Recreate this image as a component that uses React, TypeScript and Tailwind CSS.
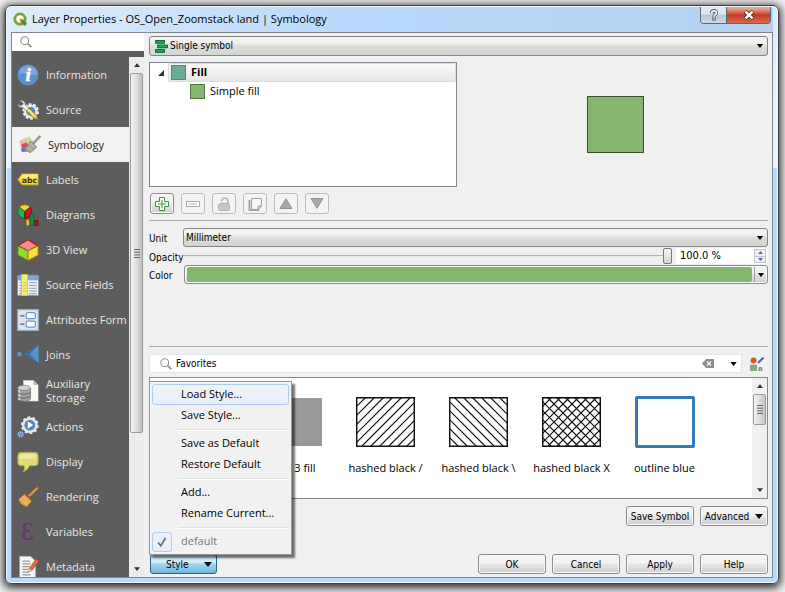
import { ButtonHTMLAttributes, FC, ReactNode } from "react";

const segoe = "font-['Open_Sans','Noto_Sans',sans-serif]";
const tahoma = "font-['DejaVu_Sans_Condensed','DejaVu_Sans',sans-serif]";

const buttonStyling =
  "rounded-[3px] border border-[#8b8b8b] bg-linear-to-b from-[#f3f3f3] from-45% via-[#e6e6e6] via-50% to-[#cfcfcf] shadow-[inset_0_0_0_1px_#fafafa]";
const comboStyling =
  "rounded-[3px] border border-[#858585] bg-linear-to-b from-[#f1f2f1] from-30% via-[#d8dbd8] via-55% to-[#d2d5d2]";

const Arrow: FC<{ className?: string; up?: boolean }> = ({ className = "", up }) => (
  <svg viewBox="0 0 8 5" className={`h-[5px] w-2 shrink-0 ${className}`} fill="currentColor">
    <path d={up ? "M0 5 4 0 8 5Z" : "M0 0 8 0 4 5Z"} />
  </svg>
);

const SearchIcon: FC<{ className?: string }> = ({ className = "" }) => (
  <svg viewBox="0 0 12 12" className={`size-3 shrink-0 ${className}`} fill="none" stroke="#8f8f8f">
    <circle cx="4.7" cy="4.7" r="3.9" strokeWidth="1.1" />
    <path d="m7.6 7.6 3.8 3.6" strokeWidth="1.6" />
  </svg>
);

const Grip: FC = () => (
  <svg viewBox="0 0 6 9" className="h-[9px] w-1.5" stroke="#666" strokeWidth="1">
    <path d="M0 .5h6M0 3.2h6M0 5.9h6M0 8.5h6" />
  </svg>
);

const InformationIcon = () => (
  <svg viewBox="0 0 24 24">
    <circle cx="12" cy="12" r="11.5" fill="#5a8fcd" />
    <path d="M1.5 11a10.6 10.6 0 0 1 21 0C17 15 8 8 1.5 11Z" fill="#7ba5da" />
    <text
      x="12.3"
      y="18.5"
      textAnchor="middle"
      fontFamily="Liberation Serif, serif"
      fontWeight="bold"
      fontStyle="italic"
      fontSize="21"
      fill="#fff"
      stroke="#fff"
      strokeWidth=".6"
    >
      i
    </text>
  </svg>
);

const SourceIcon = () => (
  <svg viewBox="0 0 24 24">
    <circle cx="15" cy="13.5" r="7.5" fill="#dfe5e9" />
    <circle cx="15" cy="13.5" r="7.5" fill="none" stroke="#eef1f3" strokeWidth="3" strokeDasharray="3 1.7" />
    <circle cx="15" cy="13.5" r="4.8" fill="#5b83b5" />
    <path
      d="M2.5 2.5c3-2 7 .3 6.500 4l5 5-2.500 2.500-5.300-5C3.500 10 1 8 1 5.500l3 2L7 5.500 5.500 3Z"
      fill="#f4f4f4"
      stroke="#777"
      strokeWidth=".7"
    />
    <path d="m10.5 13 3-3 8 8 1.300 4.500-4.800-1.800Z" fill="#e5c843" stroke="#80692a" strokeWidth=".8" />
    <path d="m12 11.5 8 8" stroke="#fff09a" strokeWidth="1.2" />
  </svg>
);

const SymbologyIcon = () => (
  <svg viewBox="0 0 26 22">
    <path d="m1 7 11-5 7 9-7 8-9 1Z" fill="#9fd08c" />
    <path d="m1 7 6-3 3 6-6 4Z" fill="#f0b4b4" />
    <path d="m12 2 4 5-5 4-4-7Z" fill="#c9df96" />
    <path d="m3 11 6-2 4 7-9 3Z" fill="#e2436c" />
    <path d="m2 17 8-3 4 5-10 1Z" fill="#4585cf" />
    <path d="M24.5 2 17 10" stroke="#9d9888" strokeWidth="3" strokeLinecap="round" />
    <path d="m13 7 8 7c-2 3-5 5-8 7-3-1-5-3-6-5 3-2 5-5 6-9Z" fill="#aba598" stroke="#7d786d" strokeWidth=".7" />
    <path d="m13 10 6 5M10 14l5 4" stroke="#c9c4b8" />
  </svg>
);

const LabelsIcon = () => (
  <svg viewBox="0 0 24 14">
    <path d="M1 7 5.500 1H23v12H5.500Z" fill="#f1d43a" stroke="#c7a317" />
    <path d="M6 1.500h16.500V6H3Z" fill="#fbe978" />
    <text x="13.5" y="10.5" textAnchor="middle" fontFamily="DejaVu Sans, sans-serif" fontWeight="bold" fontSize="8.500" fill="#403712">
      abc
    </text>
  </svg>
);

const DiagramsIcon = () => (
  <svg viewBox="0 0 24 24">
    <path d="M8.500 8 2.500 3.500a8 8 0 0 1 12 0Z" fill="#f6d32d" stroke="#8c6a10" strokeWidth=".7" />
    <path d="M8.500 8 2.500 3.500C-.5 8 .5 14 8.500 16Z" fill="#24b04b" stroke="#0a6a26" strokeWidth=".8" />
    <path d="M8.500 8l6-4.500c3 4 2 11-6 12.500Z" fill="#cc1717" stroke="#700" strokeWidth=".8" />
    <path d="M10 17h3.500v6.500H10Z" fill="#f3c32a" stroke="#8c6a10" strokeWidth=".7" />
    <path d="M14.500 11h3.500v12.500h-3.500Z" fill="#15944a" stroke="#06502a" strokeWidth=".7" />
    <path d="M19.500 18H23v5.500h-3.500Z" fill="#c51010" stroke="#600" strokeWidth=".7" />
  </svg>
);

const View3DIcon = () => (
  <svg viewBox="0 0 24 24" strokeLinejoin="round">
    <path d="m12 .8 11 6.700-11 5.500L1 7Z" fill="#f58f8f" stroke="#b71515" strokeWidth="1.300" />
    <path d="m1 7.500 11 5.500v10.500L1 17.500Z" fill="#8fdc2d" stroke="#4c8b10" />
    <path d="m23 7.500-11 5.500v10.500l11-6Z" fill="#f9e03c" stroke="#a48212" />
  </svg>
);

const SourceFieldsIcon = () => (
  <svg viewBox="0 0 24 24">
    <path d="M.5 1.500h23v22H.5Z" fill="#eef2f6" stroke="#7194ba" />
    <path d="M1 2h22v5H1Z" fill="#7fa6d1" />
    <path d="M2.500 9.500h19M2.500 12.500h19M2.500 15.500h19M2.500 18.500h19M2.500 21.500h19" stroke="#8c9aab" strokeWidth="1.200" />
    <path d="M12.500 7v16" stroke="#fff" />
    <path d="M5 .5h6.500v23H5Z" fill="#f7ee78" stroke="#d6c437" />
    <path d="M6.500 9.500h4M6.500 12.500h4M6.500 15.500h4M6.500 18.500h4" stroke="#c9c062" />
  </svg>
);

const AttributesFormIcon = () => (
  <svg viewBox="0 0 24 24">
    <path d="M.7.700h22.600v22.600H.7Z" fill="#dce5ef" stroke="#91aed0" strokeWidth="1.400" />
    <path d="M3.500 7.500H8M3.500 16.500H8" stroke="#4c5663" strokeWidth="1.600" />
    <rect x="10" y="4" width="10" height="6.500" rx="1.500" fill="#fff" stroke="#6e94c0" strokeWidth="1.300" />
    <rect x="10" y="13.300" width="10" height="6.500" rx="1.500" fill="#fff" stroke="#6e94c0" strokeWidth="1.300" />
  </svg>
);

const JoinsIcon = () => (
  <svg viewBox="0 0 24 20">
    <circle cx="2.600" cy="10" r="2.600" fill="#648fc3" />
    <path d="M23.500 0v20L7 10Z" fill="#4070a6" />
    <path d="M23.500 0v20L14 10Z" fill="#5d8fcb" />
  </svg>
);

const AuxiliaryIcon = () => (
  <svg viewBox="0 0 24 24">
    <path d="M7 .5h11l5 5V23H7Z" fill="#fafafa" stroke="#ddd" strokeWidth=".6" />
    <path d="M18 .5v5h5Z" fill="#b8b8b8" />
    <path d="M.7 9v11.500c0 3.600 14 3.600 14 0V9Z" fill="#a1a1a1" stroke="#666" strokeWidth=".7" />
    <path d="M2.500 10v12" stroke="#d5d5d5" strokeWidth="2" />
    <ellipse cx="7.700" cy="8.500" rx="7" ry="2.800" fill="#d0d0d0" stroke="#777" strokeWidth=".7" />
    <path d="M.7 13c0 3.400 14 3.400 14 0M.7 17.200c0 3.400 14 3.400 14 0" fill="none" stroke="#5e5e5e" />
  </svg>
);

const ActionsIcon = () => (
  <svg viewBox="0 0 24 24">
    <circle cx="14" cy="10" r="7.200" fill="#5485bd" stroke="#e6e9ec" strokeWidth="2.600" />
    <circle cx="14" cy="10" r="8.700" fill="none" stroke="#e6e9ec" strokeWidth="2" strokeDasharray="3 2.460" />
    <path d="M11.700 5.800v8l6-4Z" fill="#fff" />
    <circle cx="4" cy="20" r="2.800" fill="#6a99cf" stroke="#94b7df" strokeWidth="1.500" strokeDasharray="1.400 1" />
  </svg>
);

const DisplayIcon = () => (
  <svg viewBox="0 0 24 24">
    <path
      d="M4.500 1.500h15A3.500 3.500 0 0 1 23 5v7.500a3.500 3.500 0 0 1-3.500 3.500h-6c-1 3-3 5-6.500 6.500C8.500 20 8.500 18 8 16H4.500A3.500 3.500 0 0 1 1 12.500V5a3.500 3.500 0 0 1 3.500-3.500Z"
      fill="#e3d978"
      stroke="#b5aa45"
    />
    <path d="M5 3.500h14c3 1 2 5-1 5H6c-4 0-4-4-1-5Z" fill="#f0eaa6" />
  </svg>
);

const RenderingIcon = () => (
  <svg viewBox="0 0 24 24">
    <path d="m13 11 9.500-9" stroke="#b06f1d" strokeWidth="3" strokeLinecap="round" />
    <path d="m13 11 9-8.500" stroke="#eeb35a" strokeWidth="1.300" />
    <path d="m8.500 8.500 8 7.500-5.500 6.500C6 22 3 19 1.500 14.500Z" fill="#e3a654" stroke="#9a6420" strokeWidth=".8" />
    <path d="m4 13.500 7 7M6.500 11.500l7 7" stroke="#f6cf8d" />
    <path d="m8.500 8.500 8 7.500" stroke="#8d5a18" strokeWidth="1.500" />
  </svg>
);

const VariablesIcon = () => (
  <svg viewBox="0 0 24 24" overflow="visible">
    <text x="11.500" y="20.500" textAnchor="middle" fontFamily="Liberation Serif, DejaVu Serif, serif" fontSize="27" fill="#66386f" stroke="#66386f" strokeWidth=".6">
      Ɛ
    </text>
  </svg>
);

const MetadataIcon = () => (
  <svg viewBox="0 0 24 24">
    <path d="M3 .5h12l5 5V24H3Z" fill="#f5f5f5" stroke="#ccc" strokeWidth=".7" />
    <path d="M6 5.500h8M6 8.500h9M6 11.500h8M6 14.500h6M6 17.500h7M6 20.500h9" stroke="#999" strokeWidth="1.300" />
    <path d="m21 3 3 2.500-8 10.500-3.500 1.500.7-3.800Z" fill="#e36a3a" stroke="#a03c17" strokeWidth=".6" />
    <path d="m13.200 13.700 2.800 2.300-3.500 1.500Z" fill="#efd9b0" />
  </svg>
);

interface Section {
  name: string;
  icon: ReactNode;
}

const sections: Section[] = [
  { name: "Information", icon: <InformationIcon /> },
  { name: "Source", icon: <SourceIcon /> },
  { name: "Symbology", icon: <SymbologyIcon /> },
  { name: "Labels", icon: <LabelsIcon /> },
  { name: "Diagrams", icon: <DiagramsIcon /> },
  { name: "3D View", icon: <View3DIcon /> },
  { name: "Source Fields", icon: <SourceFieldsIcon /> },
  { name: "Attributes Form", icon: <AttributesFormIcon /> },
  { name: "Joins", icon: <JoinsIcon /> },
  { name: "Auxiliary Storage", icon: <AuxiliaryIcon /> },
  { name: "Actions", icon: <ActionsIcon /> },
  { name: "Display", icon: <DisplayIcon /> },
  { name: "Rendering", icon: <RenderingIcon /> },
  { name: "Variables", icon: <VariablesIcon /> },
  { name: "Metadata", icon: <MetadataIcon /> },
];

const TitleBar: FC = () => (
  <header className="mt-px flex h-[25px] shrink-0 items-start justify-between rounded-t-[4px] bg-linear-to-r from-[#dfebf8] via-[#b7d9fc] via-45% to-[#b5d2ee] pl-0.5">
    <div className={`${segoe} flex h-[25px] items-center gap-1 text-[11px] text-black`}>
      <svg viewBox="0 0 16 16" className="size-[15px]">
        <circle cx="7.500" cy="7.500" r="5.500" fill="#fff" stroke="#76a53a" strokeWidth="3" />
        <path d="m7.500 7.500 3 .3 4.500 4.700-2.500 2.500L8 10.500Z" fill="#55862a" />
        <path d="m7 7 2.500.3 1 1.200-2 2L7.300 9.400Z" fill="#e98a26" />
      </svg>
      <h1>Layer Properties - OS_Open_Zoomstack land | Symbology</h1>
    </div>
    <div className="mr-0.5 flex h-[17px] overflow-hidden rounded-b-[4px] border border-t-0 border-[#5d6876]">
      <button
        aria-label="Help on this window"
        className="flex w-[26px] items-center justify-center border-r border-[#5d6876] bg-linear-to-b from-[#dfe8f2] from-45% via-[#b6c4d5] via-50% to-[#ccd9e8]"
      >
        <svg viewBox="0 0 12 14" className="h-3 w-2.5">
          <path d="M3 5c0-4 6-4 6-.5C9 6.500 6 6.500 6 9" fill="none" stroke="#4c5364" strokeWidth="4" />
          <path d="M4 10h4v3.500H4Z" fill="#4c5364" />
          <path d="M3 5c0-4 6-4 6-.5C9 6.500 6 6.500 6 9M6 10.800v1.700" fill="none" stroke="#fff" strokeWidth="2" />
        </svg>
      </button>
      <button
        aria-label="Close"
        className="flex w-[43px] items-center justify-center bg-linear-to-b from-[#e3a496] from-10% via-[#c23a22] via-50% to-[#d8694f]"
      >
        <svg viewBox="0 0 12 10" className="h-2.5 w-3">
          <path d="m2 1.500 8 7M10 1.500l-8 7" stroke="#5a3434" strokeWidth="4.200" />
          <path d="m2.500 1.700 7 6.600M9.500 1.700l-7 6.600" stroke="#fff" strokeWidth="2.400" />
        </svg>
      </button>
    </div>
  </header>
);

const Sidebar: FC = () => (
  <aside className="flex w-[132px] shrink-0 flex-col bg-[#5d5d5d]">
    <label className="flex h-[18px] shrink-0 items-center bg-white pl-2">
      <SearchIcon />
      <input aria-label="Search sections" className={`${segoe} w-full min-w-0 px-1 text-[11px] outline-none`} />
    </label>
    <div className="mt-[6px] flex min-h-0 grow">
      <nav className="min-w-0 grow overflow-hidden">
        {sections.map(({ name, icon }) => {
          const active = name === "Symbology";
          const tall = name === "Auxiliary Storage";
          return (
            <button
              key={name}
              className={`${segoe} ${active ? "bg-[#f2f2f2] pl-[7px] text-[#222]" : "pl-[5px] text-[#e8e8e8]"} ${
                tall ? "h-[37px]" : "h-[35px]"
              } flex w-full items-center gap-[7px] text-left text-[11px] leading-[14px]`}
            >
              <span className="w-[22px] shrink-0 [&>svg]:w-[22px]">{icon}</span>
              <span className={tall ? "w-12" : "whitespace-nowrap"}>{name}</span>
            </button>
          );
        })}
      </nav>
      <div className="flex w-[15px] shrink-0 flex-col items-center justify-between bg-[#ececec] py-1.5 text-[#333]">
        <Arrow up className="!h-1 !w-1.5" />
        <div className="my-1.5 flex w-[13px] grow flex-col">
          <div className="flex h-[360px] items-center justify-center rounded-[2px] border border-[#9a9a9a] bg-linear-to-r from-[#f4f4f4] via-[#dedede] to-[#bdbec2]">
            <Grip />
          </div>
        </div>
        <Arrow className="!h-1 !w-1.5" />
      </div>
    </div>
  </aside>
);

interface ToolProps {
  label: string;
  enabled?: boolean;
  children: ReactNode;
}

const ToolButton: FC<ToolProps> = ({ label, enabled, children }) => (
  <button
    aria-label={label}
    disabled={!enabled}
    className={`${enabled ? buttonStyling : "rounded-[3px] border border-[#b9bcbe] bg-[#f3f3f3]"} flex h-[21px] w-6 items-center justify-center`}
  >
    {children}
  </button>
);

const SymbolTree: FC = () => (
  <div className={`${segoe} h-[125px] w-[308px] shrink-0 border border-[#828790] bg-white text-[11px] text-black`}>
    <div className="flex h-[19px] items-center pl-2">
      <svg viewBox="0 0 6 6" className="mr-1 size-1.5">
        <path d="M6 0v6H0Z" fill="#333" />
      </svg>
      <div className="flex h-full grow items-center gap-[5px] rounded-[2px] border border-[#dcdcdc] bg-linear-to-b from-[#fafafa] to-[#e6e6e6] pl-0.5 font-bold">
        <span className="size-[15px] border border-[#4f8a80] bg-[#6bab99]" />
        Fill
      </div>
    </div>
    <div className="flex h-[19px] items-center gap-[5px] pl-10">
      <span className="size-[15px] border border-[#55793f] bg-[#85b66f]" />
      Simple fill
    </div>
  </div>
);

const SymbolTools: FC = () => (
  <div className="mt-1.5 flex gap-[7px] pl-px">
    <ToolButton label="Add symbol layer" enabled>
      <svg viewBox="0 0 14 14" className="size-3.5" fill="#f6fbf4" stroke="#4c8d4a">
        <path d="M4.500.5h5v4h4v5h-4v4h-5v-4h-4v-5h4Z" />
        <path d="M7 3v8M3 7h8" />
      </svg>
    </ToolButton>
    <ToolButton label="Remove symbol layer">
      <svg viewBox="0 0 14 6" className="h-1.5 w-3.5" fill="#fff" stroke="#a9a9a9">
        <path d="M.5.5h13v5H.5ZM3 3h8" />
      </svg>
    </ToolButton>
    <ToolButton label="Lock layer color">
      <svg viewBox="0 0 14 14" className="size-3.5">
        <path d="M4.500 4.500C4.500 0 11 0 11 4v3" fill="none" stroke="#bcbcbc" strokeWidth="1.800" />
        <rect x="1.500" y="6.500" width="11" height="7" rx="2" fill="#c6c6c6" stroke="#b0b0b0" />
      </svg>
    </ToolButton>
    <ToolButton label="Duplicate layer">
      <svg viewBox="0 0 14 14" className="size-3.5" stroke="#a0a0a0">
        <path d="M1.500 3v10.500h10" fill="none" strokeWidth="1.800" />
        <path d="M3.500 1.500h10V9L10 12.500H3.500Z" fill="#f5f5f5" />
        <path d="M13.500 9H10v3.500Z" fill="#ddd" />
      </svg>
    </ToolButton>
    <ToolButton label="Move up">
      <svg viewBox="0 0 14 11" className="h-[11px] w-3.5">
        <path d="m7 .7 6 9.800H1Z" fill="#a9a9a9" stroke="#929292" />
      </svg>
    </ToolButton>
    <ToolButton label="Move down">
      <svg viewBox="0 0 14 11" className="h-[11px] w-3.5">
        <path d="M1 .5h12L7 10.300Z" fill="#a9a9a9" stroke="#929292" />
      </svg>
    </ToolButton>
  </div>
);

const SymbolSettings: FC = () => (
  <div className="mt-[7px] flex h-[118px] flex-col">
    <div className="flex h-[19px] items-center">
      <label htmlFor="unit" className="w-[34px] shrink-0 pt-0.5">
        Unit
      </label>
      <div className="relative h-full grow">
        <select id="unit" className={`${comboStyling} h-full w-full appearance-none pl-0.5 leading-none text-black outline-none`}>
          <option>Millimeter</option>
        </select>
        <Arrow className="pointer-events-none absolute top-2 right-1 !h-1" />
      </div>
    </div>
    <div className="flex h-[18px] items-center">
      <label htmlFor="opacity" className="w-[34px] shrink-0 pt-0.5">
        Opacity
      </label>
      <input
        id="opacity"
        type="range"
        defaultValue={100}
        className="h-4 min-w-0 grow appearance-none bg-transparent [&::-webkit-slider-runnable-track]:h-0.5 [&::-webkit-slider-runnable-track]:border-t [&::-webkit-slider-runnable-track]:border-[#aeb5b8] [&::-webkit-slider-runnable-track]:bg-[#e7eaea] [&::-webkit-slider-thumb]:-mt-2 [&::-webkit-slider-thumb]:h-4 [&::-webkit-slider-thumb]:w-[9px] [&::-webkit-slider-thumb]:appearance-none [&::-webkit-slider-thumb]:rounded-[2px] [&::-webkit-slider-thumb]:border [&::-webkit-slider-thumb]:border-[#777] [&::-webkit-slider-thumb]:bg-linear-to-b [&::-webkit-slider-thumb]:from-[#f8f8f8] [&::-webkit-slider-thumb]:to-[#d2d2d2]"
      />
      <div className="ml-1 flex h-4 w-[92px] items-center bg-white pr-0.5">
        <input aria-label="Opacity value" defaultValue="100.0 %" className="w-full min-w-0 pl-1 text-[11px] outline-none" />
        <div className="flex h-3.5 w-3 shrink-0 flex-col border border-[#c3c7cc] bg-[#eef0f3] text-[#5065a8]">
          <button aria-label="Increase" className="flex grow items-center justify-center border-b border-[#c3c7cc]">
            <Arrow up className="!h-[3px] !w-[5px]" />
          </button>
          <button aria-label="Decrease" className="flex grow items-center justify-center">
            <Arrow className="!h-[3px] !w-[5px]" />
          </button>
        </div>
      </div>
    </div>
    <div className="flex h-[19px] items-center">
      <span className="w-[35px] shrink-0 pt-0.5">Color</span>
      <div className={`${buttonStyling} flex h-full grow p-px pl-0.5`}>
        <button aria-label="Color" className="grow rounded-[2px] bg-[#84b66f]" />
        <button aria-label="Color menu" className="ml-0.5 flex w-3 items-center justify-center border-l border-[#9a9a9a]">
          <Arrow className="!h-1" />
        </button>
      </div>
    </div>
  </div>
);

// 45° strokes, cut off by the swatch's own box
const hatchLines = (back: boolean) => {
  let d = "";
  for (let x = -49; x < 110; x += 9) {
    d += back ? `M${x} 0l50 50` : `M${x} 50l50-50`;
  }
  return d;
};

const HatchSwatch: FC<{ slash?: boolean; back?: boolean }> = ({ slash, back }) => (
  <svg viewBox="0 0 59 50" className="h-[50px] w-[59px]" fill="none" stroke="#111" strokeWidth="1.200">
    {slash && <path d={hatchLines(false)} />}
    {back && <path d={hatchLines(true)} />}
    <path d="M.7.7h57.600v48.600H.7Z" strokeWidth="1.500" />
  </svg>
);

const symbols: { name: string; swatch: ReactNode }[] = [
  { name: "gray 3 fill", swatch: <div className="h-12 w-[59px] bg-[#999]" /> },
  { name: "hashed black /", swatch: <HatchSwatch slash /> },
  { name: "hashed black \\", swatch: <HatchSwatch back /> },
  { name: "hashed black X", swatch: <HatchSwatch slash back /> },
  { name: "outline blue", swatch: <div className="h-[52px] w-[60px] rounded-[2px] border-[3px] border-[#337ab7]" /> },
];

const SymbolGallery: FC = () => (
  <div className="mt-1 flex h-[122px] border border-[#828790] bg-white">
    <ul className={`${segoe} flex min-w-0 grow overflow-hidden pt-[17px] pl-24 text-[11px] text-black`}>
      {symbols.map(({ name, swatch }) => (
        <li key={name} className="flex w-[93px] shrink-0 flex-col items-center">
          <div className="flex h-[54px] items-center">{swatch}</div>
          <span className="mt-[11px] leading-4 whitespace-nowrap">{name}</span>
        </li>
      ))}
    </ul>
    <div className="flex w-[15px] shrink-0 flex-col items-center bg-[#f0f0f0] py-1.5 text-[#333]">
      <Arrow up className="!h-1 !w-1.5" />
      <div className="my-1.5 w-[13px] grow">
        <div className="flex h-[31px] items-center justify-center rounded-[2px] border border-[#9a9a9a] bg-linear-to-r from-[#f4f4f4] via-[#dedede] to-[#c4c5c8]">
          <Grip />
        </div>
      </div>
      <Arrow className="!h-1 !w-1.5" />
    </div>
  </div>
);

const FavoritesBar: FC = () => (
  <div className="mt-[7px] flex h-[19px] items-center gap-2">
    <label className="flex h-full grow items-center border border-[#e2e5e9] bg-white pr-1 pl-2.5">
      <SearchIcon />
      <input aria-label="Symbol group" defaultValue="Favorites" className="min-w-0 grow pl-1 text-black outline-none" />
      <button aria-label="Clear" className="mr-4">
        <svg viewBox="0 0 12 9" className="h-[9px] w-3">
          <path d="M4 0h8v9H4L0 4.500Z" fill="#8e8e8e" />
          <path d="m5 2.500 4 4M9 2.500l-4 4" stroke="#fff" strokeWidth="1.200" />
        </svg>
      </button>
      <button aria-label="Show groups" className="text-black">
        <Arrow className="!h-1 !w-[7px]" />
      </button>
    </label>
    <button aria-label="Style manager" className="mr-1">
      <svg viewBox="0 0 14 14" className="size-3.5">
        <circle cx="3.500" cy="3.500" r="3" fill="#d2602f" />
        <path d="m8 6 5.500-5.500" stroke="#44679c" strokeWidth="2" />
        <path d="M.5 8h6v5.500h-6Z" fill="#7fae84" stroke="#5c9163" strokeWidth=".6" />
        <text x="8" y="13.500" fontFamily="Liberation Sans, sans-serif" fontWeight="bold" fontSize="8" fill="#777">
          a
        </text>
      </svg>
    </button>
  </div>
);

const DialogButton: FC<ButtonHTMLAttributes<HTMLButtonElement>> = ({ children, ...rest }) => (
  <button {...rest} className={`${buttonStyling} flex h-5 w-[68px] items-center justify-center gap-1.5 whitespace-nowrap text-black`}>
    {children}
  </button>
);

const menuGroups = [
  ["Load Style...", "Save Style..."],
  ["Save as Default", "Restore Default"],
  ["Add...", "Rename Current..."],
];

const StyleMenu: FC = () => (
  <div
    role="menu"
    className={`${segoe} absolute bottom-full left-0 -mb-px -ml-px w-[143px] border border-[#979797] bg-[#f1f1f1] px-0.5 py-0.5 text-[11px] text-black shadow-[3px_3px_2px_rgba(0,0,0,0.55)]`}
  >
    {menuGroups.map((group) => (
      <div key={group[0]}>
        {group.map((item) => (
          <button
            key={item}
            role="menuitem"
            className={`${
              item === "Load Style..." ? "border-[#aeccf0] bg-linear-to-b from-[#f0f4f9] to-[#e8eef6]" : "border-transparent"
            } flex h-[21px] w-full items-center rounded-[3px] border pl-[28px] text-left`}
          >
            {item}
          </button>
        ))}
        <div className="mt-[3px] mb-[2px] ml-[26px] h-0.5 border-t border-[#e0e0e0] bg-white" />
      </div>
    ))}
    <button role="menuitemcheckbox" aria-checked="true" disabled className="flex h-[21px] w-full items-center gap-[9px] text-left text-[#777]">
      <span className="flex h-5 w-5 items-center justify-center rounded-[3px] border border-[#aeccf0] bg-[#eaf0f7]">
        <svg viewBox="0 0 10 10" className="size-2.5" fill="none" stroke="#666" strokeWidth="1.600">
          <path d="m1 5.500 2.800 3.300L8.500 1" />
        </svg>
      </span>
      default
    </button>
  </div>
);

const SymbologyPage: FC = () => (
  <main className={`${tahoma} flex min-w-0 grow flex-col pt-[3px] pr-1 pl-[5px] text-[10px] text-black`}>
    <div className="relative h-5 shrink-0">
      <select aria-label="Renderer" className={`${comboStyling} h-full w-full appearance-none pl-5 leading-none text-black outline-none`}>
        <option>Single symbol</option>
      </select>
      <svg viewBox="0 0 13 13" className="pointer-events-none absolute top-1 left-1.5 h-[13px] w-[13px]" fill="#18ab57" stroke="#0b6b33">
        <path d="M.5.5h9v2.800h-9ZM2.500 5h10v2.800h-10ZM.5 9.600h9v2.800h-9Z" />
      </svg>
      <Arrow className="pointer-events-none absolute top-2 right-1 !h-1" />
    </div>
    <div className="mt-1.5 flex">
      <SymbolTree />
      <div className="flex grow items-center justify-center pl-1.5">
        <div className="size-[57px] border border-[#3a4f31] bg-[#85b66f]" />
      </div>
    </div>
    <SymbolTools />
    <hr className="mt-1.5 border-[#a8a8a8]" />
    <SymbolSettings />
    <hr className="border-[#a8a8a8]" />
    <FavoritesBar />
    <SymbolGallery />
    <div className="mt-[7px] flex justify-end gap-1.5">
      <DialogButton>Save Symbol</DialogButton>
      <DialogButton>
        Advanced <Arrow />
      </DialogButton>
    </div>
    <footer className="mt-auto mb-[3px] flex justify-between pl-px">
      <div className="relative">
        <StyleMenu />
        <button
          aria-haspopup="menu"
          aria-expanded="true"
          className="flex h-5 w-[67px] items-center justify-between rounded-[3px] border border-[#2f6388] bg-linear-to-b from-[#d3ecf9] from-40% via-[#a5d6ef] via-50% to-[#6fb7dc] pr-1 pl-[15px] text-black"
        >
          Style <Arrow />
        </button>
      </div>
      <div className="flex gap-1.5">
        <DialogButton>OK</DialogButton>
        <DialogButton>Cancel</DialogButton>
        <DialogButton>Apply</DialogButton>
        <DialogButton>Help</DialogButton>
      </div>
    </footer>
  </main>
);

const App: FC = () => {
  return (
    <div className="flex h-screen overflow-hidden bg-[#eee] pt-[5px] pr-1.5 pb-2 pl-[5px]">
      <div className="flex min-w-0 grow flex-col rounded-[6px] border border-[#3d4249] bg-linear-to-b from-[#dfecfa] from-0% via-[#e9f2fc] via-28% to-[#b8dafb] to-28% px-[5px] pb-[5px] shadow-[0_2px_8px_2px_rgba(0,0,0,0.8),inset_0_0_0_1px_#f0f7ff]">
        <TitleBar />
        <div className="flex min-h-0 grow border border-[#7d8794] bg-[#f0f0f0]">
          <Sidebar />
          <SymbologyPage />
        </div>
      </div>
    </div>
  );
};

export default App;
